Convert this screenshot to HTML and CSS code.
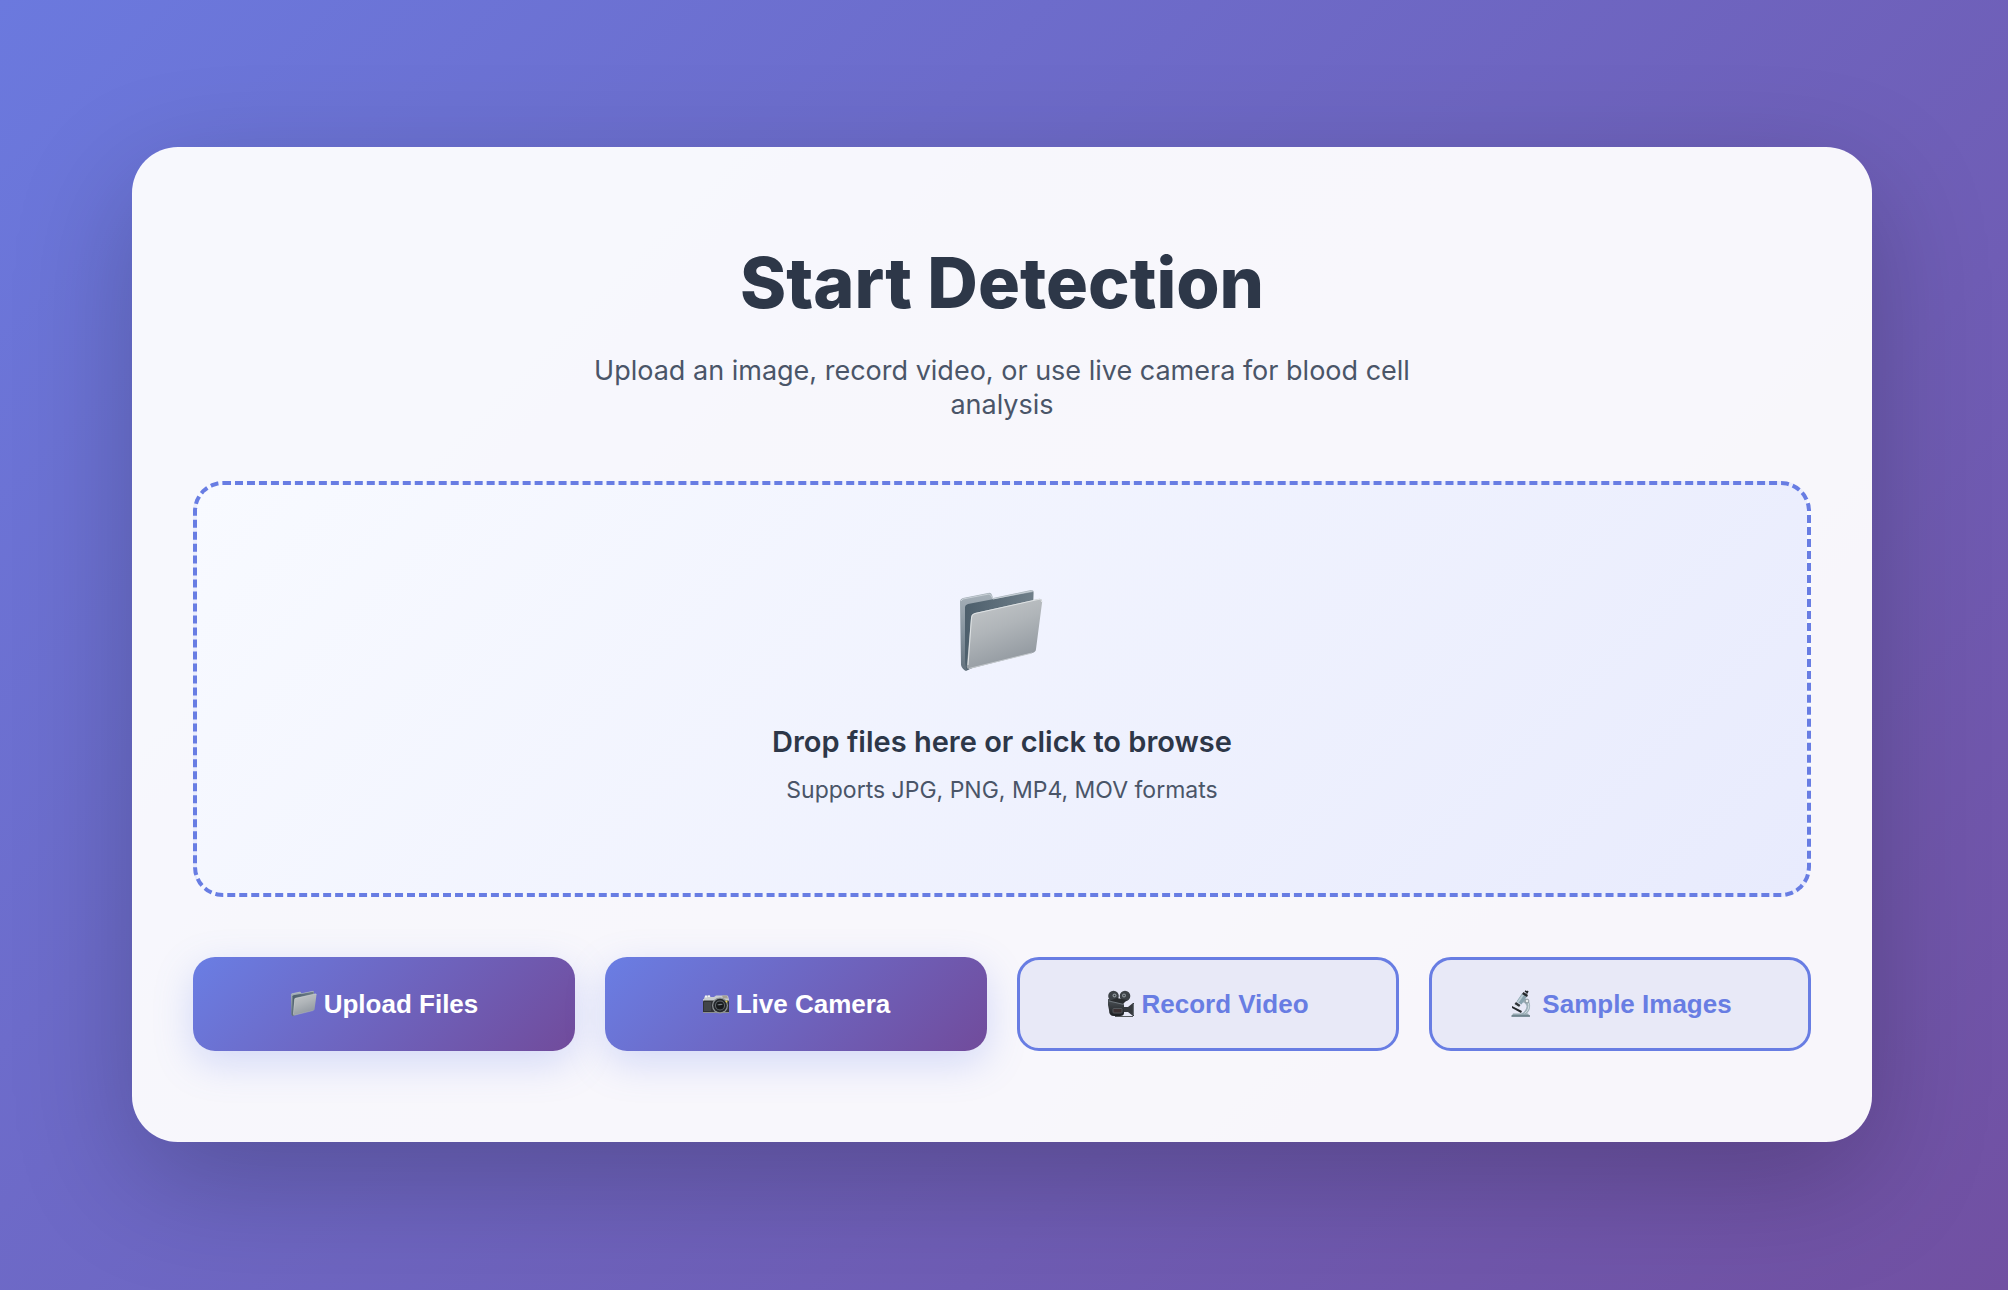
FILE: index.html
```html
<!DOCTYPE html>
<html lang="en">
<head>
<meta charset="utf-8">
<meta name="viewport" content="width=device-width, initial-scale=1">
<title>Start Detection</title>
<link rel="stylesheet" href="styles.css">
</head>
<body>
<svg class="defs" aria-hidden="true">
  <defs>
    <linearGradient id="folder-back" x1="0" y1="0" x2="0" y2="1">
      <stop offset="0" stop-color="#a9b3bb"/><stop offset=".5" stop-color="#8795a0"/><stop offset="1" stop-color="#63717d"/>
    </linearGradient>
    <linearGradient id="folder-inside" x1="0" y1="0" x2="1" y2="0">
      <stop offset="0" stop-color="#4d5f6c"/><stop offset="1" stop-color="#6f7e89"/>
    </linearGradient>
    <linearGradient id="folder-front" x1="0" y1="0" x2=".4" y2="1">
      <stop offset="0" stop-color="#c6c9cb"/><stop offset=".5" stop-color="#b0b5b9"/><stop offset="1" stop-color="#9299a0"/>
    </linearGradient>
    <linearGradient id="reel-body" x1="0" y1="0" x2="0" y2="1">
      <stop offset="0" stop-color="#4d5358"/><stop offset="1" stop-color="#1c1e21"/>
    </linearGradient>
    <symbol id="folder" viewBox="17 17 90 90">
      <path d="M23 28 L48 23 Q51 22 52 25 L53 28 L91 20 Q94 20 94 23 L93 38 L34 97 L26 101 Q22 99 21 95 L20 32 Q20 29 23 28Z" fill="url(#folder-back)"/>
      <path d="M25 37 Q25 35 28 34 L54 29 L93 22 V38 L36 96 L27 100 Q25 96 25 88Z" fill="url(#folder-inside)"/>
      <path d="M21 31 L23 29 L49 24 Q51 24 53 29 L92 21" fill="none" stroke="#c8d0d6" stroke-width="1"/>
      <path d="M35 43 L98 29 Q103 28 102 33 L96 79 Q96 82 92 83 L29 99 Q26 99 27 95 L31 48 Q31 44 35 43Z" fill="url(#folder-front)"/>
      <path d="M28 95 L31.500 48 Q31.500 44 35 43.500 L98 29.500 Q102 29 101.500 32" fill="none" stroke="#dfe3e5" stroke-width="1"/>
      <path d="M29 98.500 L92 83" stroke="#c3c8cc" stroke-width="1"/>
    </symbol>
    <symbol id="camera" viewBox="0 0 28 28">
      <path d="M2 9 L2.500 6.500 H4.500 L5 5.500 H8 L8.500 7 H12 L14 5.500 H25 L26 6 L27 9.500 V13 H1 V9Z" fill="#c9cdd0"/>
      <path d="M3 5.500h2v2H3zM6 5.500h2v1.500H6z" fill="#f3f4f5"/>
      <path d="M20 5.500h5l1 3h-5z" fill="#a6a194"/>
      <rect x="1" y="10.500" width="26" height="12.500" rx="1" fill="#303235"/>
      <path d="M2 12h7v9H2z" fill="#424549"/>
      <path d="M1 22.500h26" stroke="#8b8f93"/>
      <circle cx="18" cy="15.500" r="8" fill="#8f9497"/>
      <circle cx="18" cy="15.500" r="6.800" fill="#25282b"/>
      <circle cx="18" cy="15.500" r="5" fill="#62696e"/>
      <circle cx="18" cy="15.500" r="4" fill="#17191b"/>
      <path d="M15 15q3-2 6-1q-2 2-6 1" fill="#7a8287"/>
      <circle cx="24.500" cy="11.500" r="1" fill="#eccf4d"/>
    </symbol>
    <symbol id="movie-camera" viewBox="0 0 28 28">
      <path d="M1 9 L10 9 L17 14 V23 Q17 26 13 26 H7 Q2 26 2 20 L1 15Z" fill="url(#reel-body)"/>
      <circle cx="6.500" cy="6" r="5.300" fill="#3d4247"/>
      <circle cx="18" cy="6" r="5.300" fill="#3d4247"/>
      <circle cx="7.500" cy="5.500" r="2" fill="#899197"/>
      <circle cx="17" cy="5.500" r="2" fill="#899197"/>
      <circle cx="7.500" cy="5.500" r=".8" fill="#33373b"/>
      <circle cx="17" cy="5.500" r=".8" fill="#33373b"/>
      <path d="M2 11 L16 14 L20 10 L10 8Z" fill="#2a2d30"/>
      <path d="M2 11 L17 14.500" stroke="#7d858b" stroke-width=".8"/>
      <path d="M17 17 L21 17 L26 13 H27 V26 H26 L21 22 H17Z" fill="#36393d"/>
      <path d="M26.400 14v11" stroke="#7d858b" stroke-width=".8"/>
      <rect x="6" y="18.500" width="9" height="4.500" rx=".8" fill="#3b3032" stroke="#62686d" stroke-width=".7"/>
      <path d="M8 26.500h18" stroke="#55595d"/>
    </symbol>
    <symbol id="microscope" viewBox="0 0 28 28">
      <path d="M15 8 Q23 10 22 17 Q22 21 18 24 H13 Q19 20 18.500 16 Q18 13 14 12Z" fill="#a0b2bb"/>
      <path d="M18 11 Q21.500 13 20.500 18 Q20 21 16 24" fill="none" stroke="#d2dde2" stroke-width="1"/>
      <path d="M14 3.500 L19 6.500 L13.500 14.500 L8.500 11.500Z" fill="#88a2ae"/>
      <path d="M14.500 4 L16 5 L10.500 13 L9 12Z" fill="#bccdd5"/>
      <path d="M15.500 2 L20 5 L19 7 L14 4Z" fill="#26292c"/>
      <path d="M17 1 L19.500 2.500 M18.500 3.500 L20 1" stroke="#26292c" stroke-width="1.500"/>
      <path d="M8 12 L12.500 15 L11 17 L6.500 14Z" fill="#303539"/>
      <circle cx="19" cy="11" r="1.900" fill="#e8edef" stroke="#687780" stroke-width=".7"/>
      <path d="M4 16 L14 21 L13 23 L4 18Z" fill="#24282b"/>
      <path d="M6 15 L11 17.500" stroke="#dce4e8"/>
      <path d="M5 23.500 H20 L22 26.500 H3.500Z" fill="#94a7b0"/>
      <path d="M3.500 26h18.500" stroke="#617782" stroke-width="1.400"/>
    </symbol>
  </defs>
</svg>
<main class="page">
  <section class="card">
    <header class="intro">
      <h1 class="title">Start Detection</h1>
      <p class="subtitle">Upload an image, record video, or use live camera for blood cell analysis</p>
    </header>
    <label class="dropzone" for="files">
      <svg class="drop-icon" aria-hidden="true"><use href="#folder"/></svg>
      <span class="drop-title">Drop files here or click to browse</span>
      <span class="drop-hint">Supports JPG, PNG, MP4, MOV formats</span>
      <input class="file-input" id="files" type="file" multiple>
    </label>
    <div class="actions">
      <button class="btn primary" type="button"><svg class="icon" aria-hidden="true"><use href="#folder"/></svg>Upload Files</button>
      <button class="btn primary" type="button"><svg class="icon" aria-hidden="true"><use href="#camera"/></svg>Live Camera</button>
      <button class="btn secondary" type="button"><svg class="icon" aria-hidden="true"><use href="#movie-camera"/></svg>Record Video</button>
      <button class="btn secondary" type="button"><svg class="icon" aria-hidden="true"><use href="#microscope"/></svg>Sample Images</button>
    </div>
  </section>
</main>
</body>
</html>
```
FILE: styles.css
```css
* { box-sizing: border-box; }

body {
  margin: 0;
  min-height: 100vh;
  font-family: Inter, sans-serif;
  color: #2d3748;
  background: linear-gradient(135deg, #6b79de 0%, #7150a2 100%);
}

.defs { position: absolute; width: 0; height: 0; }

.page { padding: 147px 136px 148px 132px; }

.card {
  padding: 90px 60px;
  border: 1px solid rgba(255, 255, 255, 0.2);
  border-radius: 46px;
  background: rgba(255, 255, 255, 0.95);
  box-shadow: 0 38px 120px rgba(0, 0, 0, 0.22);
}

.intro {
  display: flex;
  flex-direction: column;
  align-items: center;
  margin-bottom: 59px;
  text-align: center;
}

.title {
  margin: 0 0 26px;
  font-size: 70px;
  line-height: 90px;
  font-weight: 800;
}

.subtitle {
  max-width: 860px;
  margin: 0;
  font-size: 27px;
  line-height: 34px;
  color: #4a5568;
}

.dropzone {
  position: relative;
  display: flex;
  flex-direction: column;
  align-items: center;
  padding: 102px 60px 88px;
  border: 4px dashed #687de3;
  border-radius: 30px;
  background: linear-gradient(135deg, #f8faff 0%, #e8ebfd 100%);
  cursor: pointer;
}

.drop-icon { width: 90px; height: 90px; margin-bottom: 46px; }

.drop-title {
  margin-bottom: 14px;
  font-size: 29px;
  line-height: 38px;
  font-weight: 600;
}

.drop-hint {
  font-size: 23px;
  line-height: 30px;
  color: #4a5568;
}

.file-input {
  position: absolute;
  width: 1px;
  height: 1px;
  opacity: 0;
}

.actions {
  display: grid;
  grid-template-columns: repeat(4, 1fr);
  gap: 30px;
  margin-top: 60px;
}

.btn {
  display: flex;
  align-items: center;
  justify-content: center;
  gap: 6px;
  min-height: 94px;
  padding: 0 30px;
  border: 0;
  border-radius: 22px;
  font-family: "Liberation Sans", Arial, sans-serif;
  font-size: 26px;
  line-height: 32px;
  font-weight: 700;
  cursor: pointer;
}

.primary {
  color: #fff;
  background: linear-gradient(135deg, #6a7ee4 0%, #714b9b 100%);
  box-shadow: 0 12px 38px rgba(102, 126, 234, 0.25);
}

.secondary {
  color: #687de3;
  border: 3px solid #687de3;
  background: #e8e9f7;
}

.icon { flex: none; width: 28px; height: 28px; }
```
